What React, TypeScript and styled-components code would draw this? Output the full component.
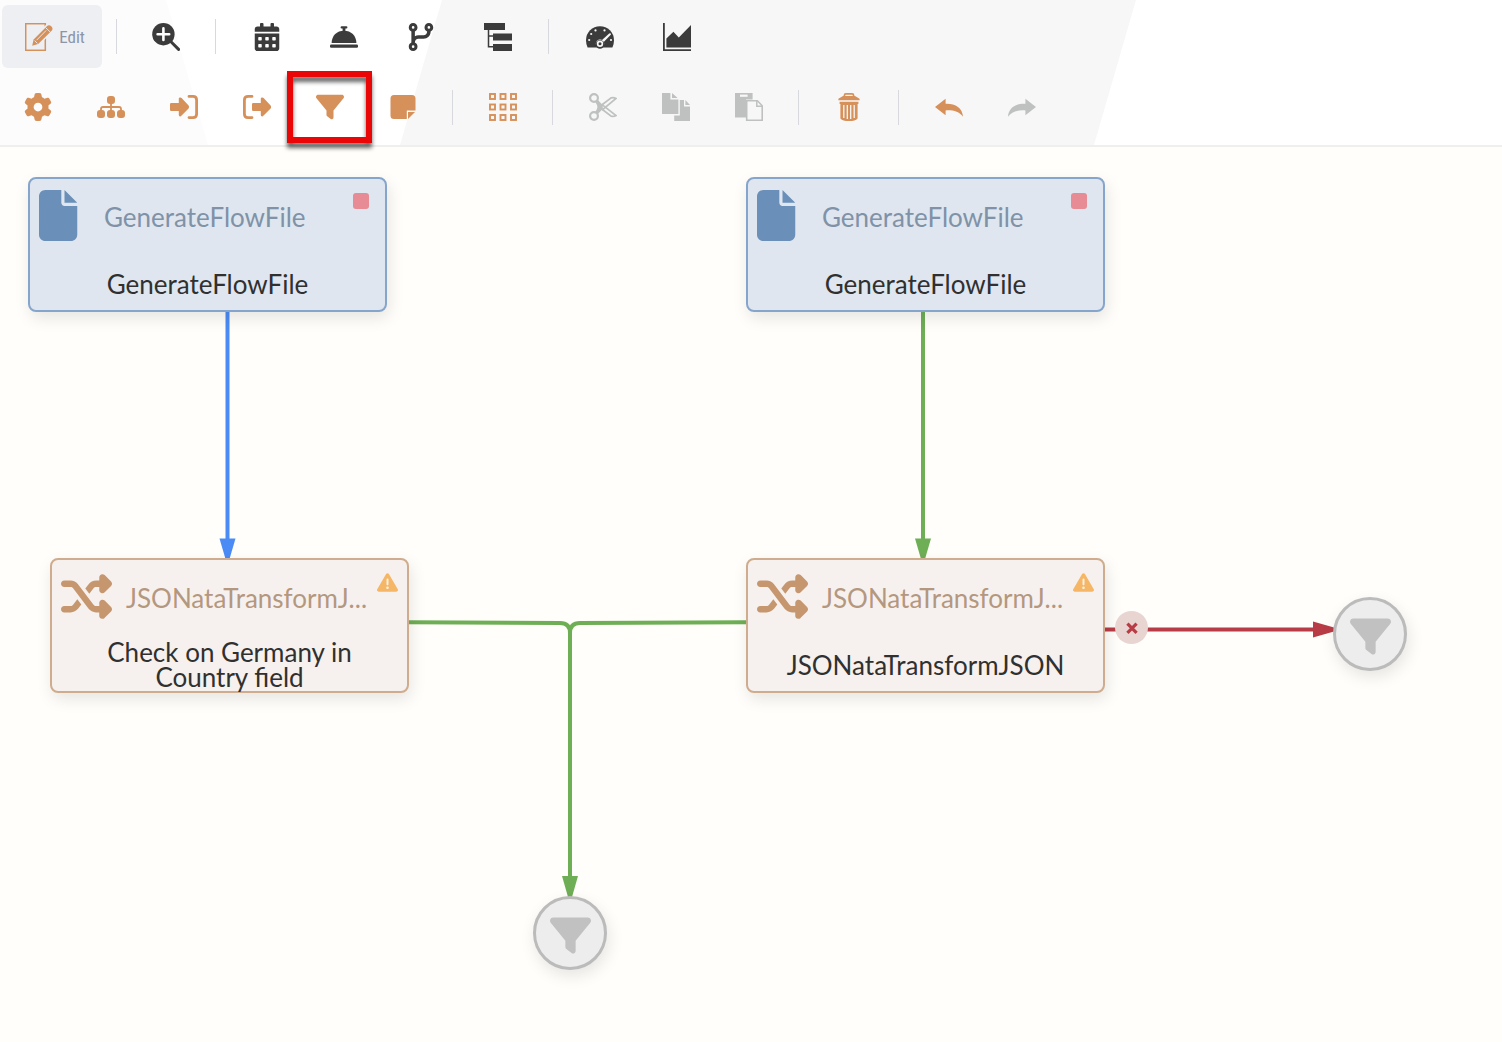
import React from "react";
import styled, { createGlobalStyle, css } from "styled-components";
import {
  FaCodeBranch,
  FaFile,
  FaFilter,
  FaGear,
  FaShuffle,
  FaTriangleExclamation,
} from "react-icons/fa6";
import { FaCalendarAlt } from "react-icons/fa";

const colors = {
  ink: "#3b3b3b",
  accent: "#d6905a",
  disabled: "#bfc1c0",
  band: "#f7f7f7",
  blue: "#4b8bf5",
  green: "#6eae55",
  red: "#b83c46",
};

const GlobalStyle = createGlobalStyle`
  *, *::before, *::after { box-sizing: border-box; }
  body { margin: 0; background: #fffefa; }
`;

const Page = styled.div`
  display: flex;
  flex-direction: column;
  min-height: 100vh;
  font-family: Lato, "Liberation Sans", sans-serif;
`;

/* ---------- Toolbar ---------- */

const Toolbar = styled.header`
  position: relative;
  z-index: 1;
  isolation: isolate;
  display: flex;
  flex-direction: column;
  gap: 3px;
  padding: 5px 0 2px;
  background: #ffffff;
  border-bottom: 2px solid #efefee;

  &::before,
  &::after {
    content: "";
    position: absolute;
    inset: 0;
    z-index: -1;
  }
  &::before {
    background: #fcfcfc;
    clip-path: polygon(0 0, 166px 0, 208px 100%, 0 100%);
  }
  &::after {
    background: ${colors.band};
    clip-path: polygon(442px 0, 1136px 0, 1094px 100%, 400px 100%);
  }
`;

const ModeRow = styled.div`
  display: flex;
  align-items: center;
  height: 63px;
  padding-left: 2px;
`;

const ToolRow = styled.div`
  display: flex;
  align-items: center;
  height: 72px;
  padding-left: 1px;
`;

const Separator = styled.span<{ $gap: number }>`
  flex: none;
  width: 1px;
  height: 35px;
  margin: 0 ${(p) => p.$gap}px;
  background: #d8d9df;
`;

type Tone = "ink" | "accent" | "disabled";

const IconButton = styled.button<{ $width: number; $tone: Tone }>`
  position: relative;
  flex: none;
  display: flex;
  align-items: center;
  justify-content: center;
  width: ${(p) => p.$width}px;
  height: 100%;
  padding: 0;
  border: 0;
  background: none;
  color: ${(p) => colors[p.$tone]};
  cursor: ${(p) => (p.$tone === "disabled" ? "default" : "pointer")};
`;

const EditButton = styled.button`
  flex: none;
  display: flex;
  align-items: center;
  justify-content: center;
  gap: 6px;
  width: 100px;
  height: 100%;
  padding: 0 8px 0 14px;
  margin-right: 2px;
  border: 0;
  border-radius: 6px;
  background: #edeff3;
  color: #8c95a6;
  font: 400 17px/20px "Roboto Condensed", Roboto, sans-serif;
  cursor: pointer;
`;

const Highlight = styled.span`
  position: absolute;
  inset: 0 -6px;
  border: 6px solid #ea0606;
  filter: drop-shadow(0 5px 2px rgba(0, 0, 0, 0.6));
  pointer-events: none;
`;

const Glyph = ({ children, size = 28 }: { children: React.ReactNode; size?: number }) => (
  <svg width={size} height={size} viewBox="0 0 28 28" fill="currentColor" aria-hidden="true">
    {children}
  </svg>
);

const EditIcon = () => (
  <svg width="28" height="28" viewBox="0 0 28 28" fill="none" stroke={colors.accent} aria-hidden="true">
    <rect x="0.7" y="0.7" width="19.6" height="26.6" strokeWidth="1.5" />
    <path d="M7.2 22.8L8.6 16.6L21.6 3.4Q24 1.2 26.4 3.4Q28.6 5.6 26.4 8L13.2 21Z" fill="#edeff3" stroke="#edeff3" strokeWidth="3" />
    <path d="M7.2 22.8L8.6 16.6L21.6 3.4Q24 1.2 26.4 3.4Q28.6 5.6 26.4 8L13.2 21Z" fill={colors.accent} stroke="none" />
    <path d="M11.6 17.2L21.2 7.4M20.6 4.6L25.4 9.2M9.6 17.6L12.4 20.4" stroke="#edeff3" strokeWidth="0.9" />
  </svg>
);

const ZoomIcon = () => (
  <Glyph>
    <circle cx="11.4" cy="11.2" r="11.2" />
    <path d="M11.4 5.4V17M5.6 11.2H17.2" stroke="#fff" strokeWidth="2.6" strokeLinecap="round" />
    <path d="M18.5 18.3L26.6 26.4" stroke="currentColor" strokeWidth="3" strokeLinecap="round" />
  </Glyph>
);

const BellIcon = () => (
  <Glyph>
    <rect x="10.6" y="3.2" width="6.8" height="2.4" rx="1.1" />
    <rect x="12.6" y="4" width="2.8" height="5" />
    <path d="M1.6 19.9C1.8 12.6 6.8 7.8 14 7.8S26.2 12.6 26.4 19.9Z" />
    <rect x="0" y="21.6" width="28" height="3.2" rx="1.2" />
  </Glyph>
);

const TreeIcon = () => (
  <Glyph>
    <path d="M0 0H21V7H0ZM9 10.5H28V17.5H9ZM9 21H28V28H9Z" />
    <path d="M4.5 7V23.7H9M4.5 13H9" fill="none" stroke="currentColor" strokeWidth="1.5" />
  </Glyph>
);

const GaugeIcon = () => (
  <Glyph>
    <path d="M1.6 24.6Q0 21 0 17.2A14 14 0 0 1 28 17.2Q28 21 26.4 24.6Z" />
    <g fill={colors.band}>
      <circle cx="3.2" cy="17" r="1.1" />
      <circle cx="5.2" cy="11" r="1.1" />
      <circle cx="9.5" cy="7.4" r="1.1" />
      <circle cx="18.5" cy="7.4" r="1.1" />
      <circle cx="25" cy="17" r="1.1" />
      <path d="M14.4 18.6L23.2 10.6Q24.8 9.8 25 11.6L16 20.8Z" />
      <circle cx="14" cy="20.8" r="4.2" />
    </g>
    <circle cx="14" cy="21.4" r="4.3" />
    <circle cx="14" cy="20.8" r="3.2" fill={colors.band} />
    <circle cx="14" cy="20.8" r="1.5" />
  </Glyph>
);

const ChartIcon = () => (
  <Glyph>
    <path d="M0 0H1.8V26.2H28V28H0Z" />
    <path d="M3.4 24.6V15.6L10.4 8.8L15.8 14.4L28 2V24.6Z" />
  </Glyph>
);

const HierarchyIcon = () => (
  <Glyph>
    <rect x="10" y="3" width="8" height="8" rx="3" />
    <rect x="0" y="17" width="8" height="8" rx="3" />
    <rect x="10" y="17" width="8" height="8" rx="3" />
    <rect x="20" y="17" width="8" height="8" rx="3" />
    <path d="M14 10V18M4 18V16Q4 14 6 14H22Q24 14 24 16V18" fill="none" stroke="currentColor" strokeWidth="1.8" />
  </Glyph>
);

const arrowPath =
  "M1.2 10H8.8V5.6Q8.8 4.2 10.4 4.4L11.6 5L18.6 12.6Q19.6 14 18.6 15.4L11.6 22.6L10.4 23.4Q8.8 23.6 8.8 22V18H1.2Q0 18 0 16.8V11.2Q0 10 1.2 10Z";

const InputIcon = () => (
  <Glyph>
    <path d={arrowPath} />
    <path d="M19 3.4H23Q26.6 3.4 26.6 7V21Q26.6 24.6 23 24.6H19" fill="none" stroke="currentColor" strokeWidth="2.8" strokeLinecap="round" />
  </Glyph>
);

const OutputIcon = () => (
  <Glyph>
    <path d={arrowPath} transform="translate(9 0)" />
    <path d="M9 3.4H5Q1.4 3.4 1.4 7V21Q1.4 24.6 5 24.6H9" fill="none" stroke="currentColor" strokeWidth="2.8" strokeLinecap="round" />
  </Glyph>
);

const NoteIcon = () => (
  <Glyph>
    <path d="M5 2H23A3.5 3.5 0 0 1 26.5 5.5V17.6H17.8V26H5A3.5 3.5 0 0 1 1.5 22.5V5.5A3.5 3.5 0 0 1 5 2Z" />
    <path d="M19 19H26L19 26Z" />
  </Glyph>
);

const GridIcon = () => (
  <Glyph>
    {[0, 10.5, 21].map((y) =>
      [0, 10.5, 21].map((x) => (
        <rect key={`${x}-${y}`} x={x + 1} y={y + 1} width="5" height="5" fill="none" stroke="currentColor" strokeWidth="1.9" />
      )),
    )}
  </Glyph>
);

const CutIcon = () => (
  <Glyph>
    <g fill="none" stroke="currentColor">
      <circle cx="5" cy="5" r="3.9" strokeWidth="2.2" />
      <circle cx="5" cy="23" r="3.9" strokeWidth="2.2" />
      <path d="M11.4 13L22.2 4.8Q25 4.2 27 5.4L13.8 16.4Z" strokeWidth="1.7" />
      <path d="M13.4 11.8L27 22.6Q25 23.8 22.2 23.2L11.4 15Z" strokeWidth="1.7" />
    </g>
    <path d="M6.4 9.2L9 7L13.6 12V16L9 21L6.4 18.8Q8.4 16 8.4 14T6.4 9.2Z" />
  </Glyph>
);

const CopyIcon = () => (
  <Glyph>
    <path d="M0 0H8.4V6.4H16.4V21H0Z" />
    <path d="M10 0L15.6 5H10Z" />
    <path d="M17.8 7H22V13.4H28V28H12.2V22.4H17.8Z" />
    <path d="M23.4 7L28 12H23.4Z" />
  </Glyph>
);

const PasteIcon = () => (
  <Glyph>
    <path d="M0 0H17.6V6.4H11V24.6H0Z" />
    <rect x="5" y="1.6" width="7.6" height="2.2" fill={colors.band} />
    <path d="M11.7 7.8H22.4L27.2 12.8V27.2H11.7Z" fill={colors.band} stroke="currentColor" strokeWidth="1.6" />
    <path d="M21.8 8V13.2H27" fill="none" stroke="currentColor" strokeWidth="1.5" />
  </Glyph>
);

const TrashIcon = () => (
  <Glyph>
    <path d="M9.4 3.6V2.4Q9.4 0.9 10.9 0.9H17.1Q18.6 0.9 18.6 2.4V3.6" fill="none" stroke="currentColor" strokeWidth="1.7" />
    <path d="M8 3H20L24.6 5.8V7.2H3.4V5.8Z" />
    <path d="M4.6 8.8H23.4V11H22.6V25.4Q20.4 28 14 28T5.4 25.4V11H4.6Z" />
    <path d="M8.8 12V25M12.3 12V26M15.7 12V26M19.2 12V25" stroke={colors.band} strokeWidth="1.3" />
  </Glyph>
);

const undoPath = "M0 14L10.6 5.7V10.8C20 10.4 27.4 14.6 28 23.8C24 18.4 18.4 17 10.6 17.4V22.2Z";

const UndoIcon = () => (
  <Glyph>
    <path d={undoPath} />
  </Glyph>
);

const RedoIcon = () => (
  <Glyph>
    <path d={undoPath} transform="matrix(-1 0 0 1 28 0)" />
  </Glyph>
);

const CrossIcon = () => (
  <svg width="14" height="14" viewBox="0 0 14 14" fill="none" stroke="currentColor" aria-hidden="true">
    <path d="M2.4 2.6L11.6 11.8M11.6 2.6L2.4 11.8" strokeWidth="3.2" />
  </svg>
);

type Tool = { label: string; icon: React.ReactNode; tone: Tone; marked?: boolean };

const modeGroups: { width: number; tools: Tool[] }[] = [
  { width: 74, tools: [{ label: "Zoom in", icon: <ZoomIcon />, tone: "ink" }] },
  {
    width: 77,
    tools: [
      { label: "Schedule", icon: <FaCalendarAlt size={28} />, tone: "ink" },
      { label: "Services", icon: <BellIcon />, tone: "ink" },
      { label: "Versions", icon: <FaCodeBranch size={28} />, tone: "ink" },
      { label: "Outline", icon: <TreeIcon />, tone: "ink" },
    ],
  },
  {
    width: 77,
    tools: [
      { label: "Dashboard", icon: <GaugeIcon />, tone: "ink" },
      { label: "Statistics", icon: <ChartIcon />, tone: "ink" },
    ],
  },
];

const toolGroups: Tool[][] = [
  [
    { label: "Processor", icon: <FaGear size={28} />, tone: "accent" },
    { label: "Process group", icon: <HierarchyIcon />, tone: "accent" },
    { label: "Input port", icon: <InputIcon />, tone: "accent" },
    { label: "Output port", icon: <OutputIcon />, tone: "accent" },
    { label: "Funnel", icon: <FaFilter size={28} />, tone: "accent", marked: true },
    { label: "Note", icon: <NoteIcon />, tone: "accent" },
  ],
  [{ label: "Arrange", icon: <GridIcon />, tone: "accent" }],
  [
    { label: "Cut", icon: <CutIcon />, tone: "disabled" },
    { label: "Copy", icon: <CopyIcon />, tone: "disabled" },
    { label: "Paste", icon: <PasteIcon />, tone: "disabled" },
  ],
  [{ label: "Delete", icon: <TrashIcon />, tone: "accent" }],
  [
    { label: "Undo", icon: <UndoIcon />, tone: "accent" },
    { label: "Redo", icon: <RedoIcon />, tone: "disabled" },
  ],
];

const ToolButton = ({ tool, width }: { tool: Tool; width: number }) => (
  <IconButton type="button" aria-label={tool.label} $width={width} $tone={tool.tone} disabled={tool.tone === "disabled"}>
    {tool.icon}
    {tool.marked && <Highlight />}
  </IconButton>
);

/* ---------- Flow canvas ---------- */

const Canvas = styled.main`
  position: relative;
  flex: 1;
  min-height: 860px;
  overflow: hidden;
  background: #fffefa;
`;

const Edges = styled.svg`
  position: absolute;
  inset: 0;
  width: 100%;
  height: 100%;
`;

const placed = css<{ $x: number; $y: number }>`
  position: absolute;
  left: ${(p) => p.$x}px;
  top: ${(p) => p.$y}px;
`;

type Kind = "source" | "transform";

const palette = {
  source: { border: "#86a5cd", fill: "#dfe6ef", icon: "#6a8fb8", title: "#8092a8" },
  transform: { border: "#cfac8e", fill: "#f6f1ee", icon: "#c6966f", title: "#b4977f" },
};

const Card = styled.article<{ $x: number; $y: number; $kind: Kind }>`
  ${placed}
  display: flex;
  flex-direction: column;
  width: 359px;
  height: 135px;
  border: 2px solid ${(p) => palette[p.$kind].border};
  border-radius: 8px;
  background: ${(p) => palette[p.$kind].fill};
  box-shadow: 2px 6px 16px rgba(0, 0, 0, 0.1);
  font-size: 26px;
  line-height: 25px;
`;

const CardHeader = styled.div<{ $kind: Kind }>`
  display: grid;
  grid-template-columns: 56px 1fr 22px;
  align-items: center;
  column-gap: 9px;
  height: 78px;
  padding: 0 13px 6px 9px;
  color: ${(p) => palette[p.$kind].icon};
`;

const CardType = styled.span<{ $kind: Kind }>`
  padding-top: 5px;
  white-space: nowrap;
  color: ${(p) => palette[p.$kind].title};
`;

const CardName = styled.h2`
  flex: 1;
  display: flex;
  align-items: center;
  justify-content: center;
  margin: 0 auto;
  padding-top: 1px;
  max-width: 280px;
  font: inherit;
  text-align: center;
  color: #303030;
`;

const Status = styled.span`
  display: flex;
  justify-content: center;
  align-items: center;
  align-self: start;
  height: 20px;
  margin-top: 12px;
  color: #f5b765;
`;

const Stopped = styled.span`
  width: 16px;
  height: 16px;
  border-radius: 3px;
  background: #e78c94;
`;

const Funnel = styled.div<{ $x: number; $y: number }>`
  ${placed}
  display: flex;
  align-items: center;
  justify-content: center;
  width: 74px;
  height: 74px;
  padding-top: 4px;
  border: 3px solid #bbbbbb;
  border-radius: 50%;
  background: #ededed;
  color: #c1c1c1;
  box-shadow: 2px 6px 16px rgba(0, 0, 0, 0.1);
`;

const FailureBadge = styled.span<{ $x: number; $y: number }>`
  ${placed}
  display: flex;
  align-items: center;
  justify-content: center;
  width: 33px;
  height: 33px;
  border-radius: 50%;
  background: #e8d5d1;
  color: ${colors.red};
`;

const nodes: { x: number; y: number; kind: Kind; type: string; name: string }[] = [
  { x: 28, y: 30, kind: "source", type: "GenerateFlowFile", name: "GenerateFlowFile" },
  { x: 746, y: 30, kind: "source", type: "GenerateFlowFile", name: "GenerateFlowFile" },
  { x: 50, y: 411, kind: "transform", type: "JSONataTransformJ...", name: "Check on Germany in Country field" },
  { x: 746, y: 411, kind: "transform", type: "JSONataTransformJ...", name: "JSONataTransformJSON" },
];

export default function App() {
  return (
    <Page>
      <GlobalStyle />
      <Toolbar>
        <ModeRow>
          <EditButton type="button">
            <EditIcon />
            Edit
          </EditButton>
          {modeGroups.map((group, i) => (
            <React.Fragment key={i}>
              <Separator $gap={12} />
              {group.tools.map((tool) => (
                <ToolButton key={tool.label} tool={tool} width={group.width} />
              ))}
            </React.Fragment>
          ))}
        </ModeRow>
        <ToolRow>
          {toolGroups.map((group, i) => (
            <React.Fragment key={i}>
              {i > 0 && <Separator $gap={13} />}
              {group.map((tool) => (
                <ToolButton key={tool.label} tool={tool} width={73} />
              ))}
            </React.Fragment>
          ))}
        </ToolRow>
      </Toolbar>

      <Canvas>
        <Edges aria-hidden="true">
          <g fill="none" strokeWidth="4">
            <path d="M227.5 163V394" stroke={colors.blue} />
            <path d="M923 163V394" stroke={colors.green} />
            <path d="M408 475.3L560 476Q570 476 570 486V732M746 475.3L580 476Q570 476 570 486" stroke={colors.green} />
            <path d="M1104 482.5H1315" stroke={colors.red} />
          </g>
          <path d="M219.5 391.5H235.5L229.5 412H225.5Z" fill={colors.blue} />
          <path d="M915 391.5H931L925 412H921Z" fill={colors.green} />
          <path d="M562 729H578L572 750H568Z" fill={colors.green} />
          <path d="M1313 474.5V490.5L1334 484.5V480.5Z" fill={colors.red} />
        </Edges>

        {nodes.map((node) => (
          <Card key={`${node.x}-${node.y}`} $x={node.x} $y={node.y} $kind={node.kind}>
            <CardHeader $kind={node.kind}>
              {node.kind === "source" ? (
                <FaFile size={51} preserveAspectRatio="xMinYMid meet" />
              ) : (
                <FaShuffle size={51} />
              )}
              <CardType $kind={node.kind}>{node.type}</CardType>
              <Status>{node.kind === "source" ? <Stopped /> : <FaTriangleExclamation size={21} />}</Status>
            </CardHeader>
            <CardName>{node.name}</CardName>
          </Card>
        ))}

        <FailureBadge $x={1115} $y={464}>
          <CrossIcon />
        </FailureBadge>
        <Funnel $x={533} $y={749}>
          <FaFilter size={41} />
        </Funnel>
        <Funnel $x={1333} $y={450}>
          <FaFilter size={41} />
        </Funnel>
      </Canvas>
    </Page>
  );
}
